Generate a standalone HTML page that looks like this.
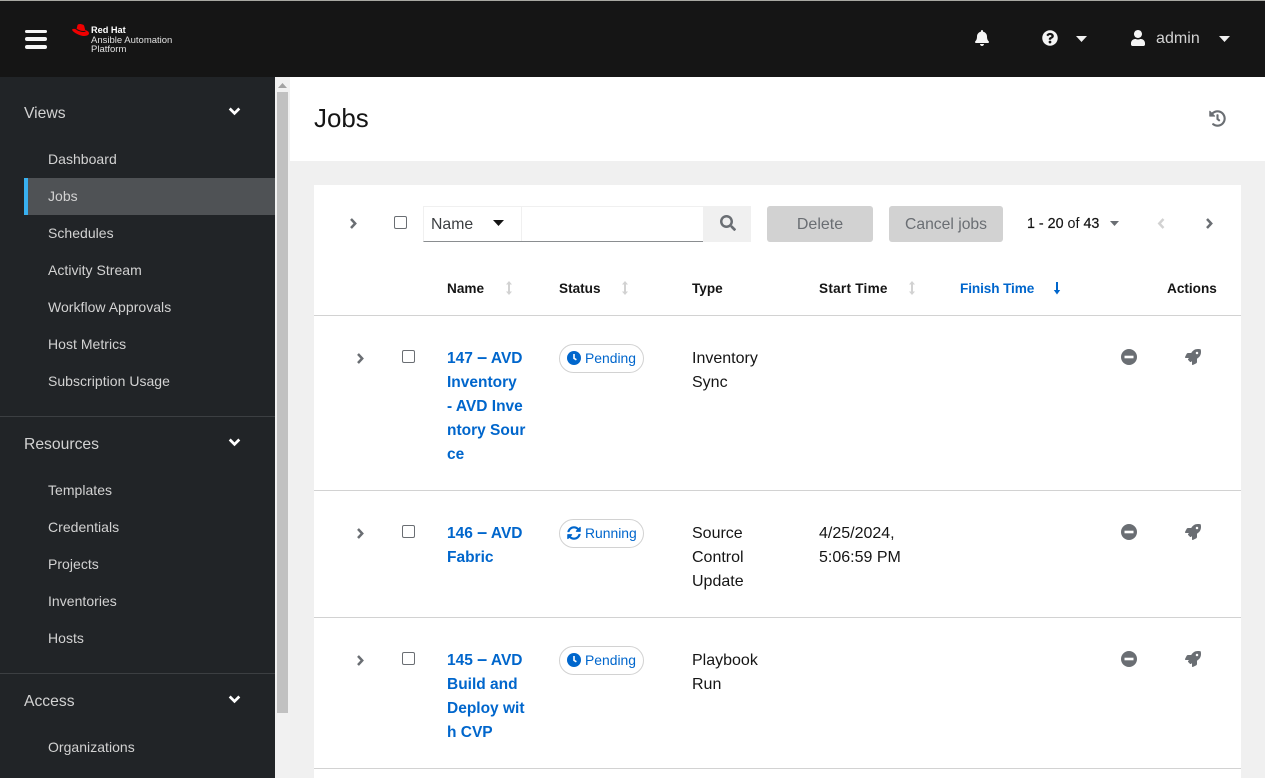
<!DOCTYPE html>
<html lang="en"><head><meta charset="utf-8"><title>Jobs</title>
<style>
html,body{margin:0;padding:0;width:1265px;height:778px;overflow:hidden;background:#f0f0f0;font-family:"Liberation Sans",sans-serif;}
.a{position:absolute;}
.t{position:absolute;white-space:nowrap;line-height:24px;height:24px;}
.nav{color:#d2d2d2;font-size:14px;left:48px;letter-spacing:.03px;}
.sec{color:#d2d2d2;font-size:15.7px;left:24px;}
.th{color:#151515;font-size:13.6px;font-weight:bold;top:277px;}
.lnk{color:#0066cc;font-size:15.5px;font-weight:bold;left:447px;}
.lnk i{font-style:normal;font-size:18px;line-height:0;}
.c{color:#151515;font-size:16px;}
.line{position:absolute;left:314px;width:927px;height:1px;background:#d2d2d2;}
.cb{position:absolute;width:11px;height:11px;border:1px solid #6a6e73;border-radius:2px;background:#fff;}
.badge{position:absolute;left:559px;width:83px;height:27px;border:1px solid #d2d2d2;border-radius:15px;background:#fff;}
.badge span{position:absolute;left:25px;top:0;line-height:27px;font-size:13.9px;color:#0066cc;}
svg{position:absolute;display:block;}
</style></head><body>
<!-- top bar -->
<div class="a" style="left:0;top:0;width:1265px;height:77px;background:#151515"></div>
<div class="a" style="left:0;top:0;width:1265px;height:1px;background:#a8a8a2"></div>
<div class="a" style="left:25px;top:29.500px;width:22px;height:3.500px;background:#f5f5f5;border-radius:2px"></div>
<div class="a" style="left:25px;top:37px;width:22px;height:3.500px;background:#f5f5f5;border-radius:2px"></div>
<div class="a" style="left:25px;top:45px;width:22px;height:3.500px;background:#f5f5f5;border-radius:2px"></div>
<svg style="left:72px;top:23px" width="18" height="14" viewBox="0 0 18 14"><path d="M5.5 2C6 1 8 .7 9.5 1.2 11 1.7 11.8 1.500 12.2 3L13.2 7C15 7.500 17 8.700 17 10.300 17 12 15 13 12.500 13 8.500 13 3.500 10.500 1 8.200 .3 7.500 -.2 6.800 .3 6.300 1 5.600 3 6 4.500 6.500z" fill="#e00"/><path d="M4.500 6.300C7 7.800 10.500 8.800 13.400 8.300" stroke="#151515" stroke-width="1" fill="none"/></svg>
<div class="t" style="left:91px;top:24px;font-size:9.200px;font-weight:bold;color:#fff;line-height:12px;height:12px">Red Hat</div>
<div class="t" style="left:91px;top:34.500px;font-size:9.500px;color:#e0e0e0;line-height:12px;height:12px">Ansible Automation</div>
<div class="t" style="left:91px;top:43.500px;font-size:9.500px;color:#e0e0e0;line-height:12px;height:12px">Platform</div>
<svg style="left:975px;top:30px" width="14" height="16" viewBox="0 0 448 512"><path d="M224 512c35.32 0 63.97-28.65 63.97-64H160.03c0 35.35 28.65 64 63.97 64zm215.39-149.71c-19.32-20.76-55.47-51.99-55.47-154.29 0-77.7-54.48-139.9-127.94-155.16V32c0-17.67-14.32-32-31.98-32s-31.98 14.33-31.98 32v20.84C118.56 68.1 64.08 130.3 64.08 208c0 102.3-36.15 133.53-55.47 154.29-6 6.45-8.66 14.16-8.61 21.71.11 16.4 12.98 32 32.1 32h383.8c19.12 0 32-15.6 32.1-32 .05-7.55-2.61-15.27-8.61-21.71z" fill="#f5f5f5"/></svg>
<svg style="left:1042px;top:30px" width="16" height="16" viewBox="0 0 512 512"><path d="M504 256c0 136.997-111.043 248-248 248S8 392.997 8 256C8 119.083 119.043 8 256 8s248 111.083 248 248zM262.655 90c-54.497 0-89.255 22.957-116.549 63.758-3.536 5.286-2.353 12.415 2.715 16.258l34.699 26.31c5.205 3.947 12.621 3.008 16.665-2.122 17.864-22.658 30.113-35.797 57.303-35.797 20.429 0 45.698 13.148 45.698 32.958 0 14.976-12.363 22.667-32.534 33.976C247.128 238.528 216 254.941 216 296v4c0 6.627 5.373 12 12 12h56c6.627 0 12-5.373 12-12v-1.333c0-28.462 83.186-29.647 83.186-106.667 0-58.002-60.165-102-116.531-102zM256 338c-25.365 0-46 20.635-46 46 0 25.364 20.635 46 46 46s46-20.636 46-46c0-25.365-20.635-46-46-46z" fill="#f5f5f5"/></svg>
<svg style="left:1076px;top:36px" width="11" height="6" viewBox="0 0 11 6"><path d="M0 0h11L5.500 6z" fill="#f0f0f0"/></svg>
<svg style="left:1131px;top:30px" width="14" height="16" viewBox="0 0 448 512"><path d="M224 256c70.7 0 128-57.3 128-128S294.7 0 224 0 96 57.3 96 128s57.3 128 128 128zm89.6 32h-16.700c-22.200 10.200-46.900 16-72.900 16s-50.600-5.800-72.900-16h-16.700C60.200 288 0 348.200 0 422.400V464c0 26.500 21.500 48 48 48h352c26.500 0 48-21.500 48-48v-41.600c0-74.200-60.200-134.400-134.400-134.400z" fill="#f5f5f5"/></svg>
<div class="t" style="left:1156px;top:27px;font-size:16px;color:#d2d2d2;letter-spacing:.05px">admin</div>
<svg style="left:1218.500px;top:36px" width="11" height="6" viewBox="0 0 11 6"><path d="M0 0h11L5.500 6z" fill="#f0f0f0"/></svg>
<!-- sidebar -->
<div class="a" style="left:0;top:77px;width:275px;height:701px;background:#212427"></div>
<div class="a" style="left:275px;top:77px;width:15px;height:701px;background:#f1f1f1"></div>
<div class="a" style="left:277px;top:92px;width:11px;height:621px;background:#c1c1c1"></div>
<svg style="left:278px;top:83px" width="9" height="5" viewBox="0 0 9 5"><path d="M0 5L4.500 0 9 5z" fill="#a3a3a3"/></svg>
<div class="a" style="left:24px;top:178px;width:251px;height:37px;background:#4f5255"></div>
<div class="a" style="left:24px;top:178px;width:4px;height:37px;background:#38b0f0"></div>
<div class="a" style="left:0;top:416px;width:275px;height:1px;background:#3c3f42"></div>
<div class="a" style="left:0;top:673px;width:275px;height:1px;background:#3c3f42"></div>
<div class="t sec" style="top:102px">Views</div>
<div class="t sec" style="top:433px">Resources</div>
<div class="t sec" style="top:690px">Access</div>
<svg style="left:228px;top:107px" width="13" height="9" viewBox="0 0 13 9"><path d="M1.700 1.500l4.800 4.800 4.800-4.800" stroke="#fff" stroke-width="2.700" fill="none"/></svg>
<svg style="left:228px;top:438px" width="13" height="9" viewBox="0 0 13 9"><path d="M1.700 1.500l4.800 4.800 4.800-4.800" stroke="#fff" stroke-width="2.700" fill="none"/></svg>
<svg style="left:228px;top:695px" width="13" height="9" viewBox="0 0 13 9"><path d="M1.700 1.500l4.800 4.800 4.800-4.800" stroke="#fff" stroke-width="2.700" fill="none"/></svg>
<div class="t nav" style="top:147px">Dashboard</div>
<div class="t nav" style="top:184px">Jobs</div>
<div class="t nav" style="top:221px">Schedules</div>
<div class="t nav" style="top:258px">Activity Stream</div>
<div class="t nav" style="top:295px">Workflow Approvals</div>
<div class="t nav" style="top:332px">Host Metrics</div>
<div class="t nav" style="top:369px">Subscription Usage</div>
<div class="t nav" style="top:478px">Templates</div>
<div class="t nav" style="top:515px">Credentials</div>
<div class="t nav" style="top:552px">Projects</div>
<div class="t nav" style="top:589px">Inventories</div>
<div class="t nav" style="top:626px">Hosts</div>
<div class="t nav" style="top:735px">Organizations</div>
<!-- page header -->
<div class="a" style="left:290px;top:77px;width:975px;height:84px;background:#fff"></div>
<div class="t" style="left:314px;top:107px;font-size:25.900px;color:#151515">Jobs</div>
<svg style="left:1208.500px;top:109.500px" width="17" height="17" viewBox="0 0 512 512"><path d="M504 255.531c.253 136.64-111.18 248.372-247.82 248.468-59.015.042-113.223-20.53-155.822-54.911-11.077-8.94-11.905-25.541-1.839-35.607l11.267-11.267c8.609-8.609 22.353-9.551 31.891-1.984C173.062 425.135 212.781 440 256 440c101.705 0 184-82.311 184-184 0-101.705-82.311-184-184-184-48.814 0-93.149 18.969-126.068 49.932l50.754 50.754c10.08 10.08 2.941 27.314-11.313 27.314H24c-8.837 0-16-7.163-16-16V38.627c0-14.254 17.234-21.393 27.314-11.314l49.372 49.372C129.209 34.136 189.552 8 256 8c136.81 0 247.747 110.78 248 247.531zm-180.912 78.784l9.823-12.63c8.138-10.463 6.253-25.542-4.21-33.679L288 256.349V152c0-13.255-10.745-24-24-24h-16c-13.255 0-24 10.745-24 24v135.651l65.409 50.874c10.463 8.137 25.541 6.253 33.679-4.21z" fill="#6a6e73"/></svg>
<!-- card -->
<div class="a" style="left:314px;top:185px;width:927px;height:593px;background:#fff"></div>
<svg style="left:349px;top:217px" width="9" height="13" viewBox="0 0 9 13"><path d="M2 2l4.200 4.500L2 11" stroke="#6a6e73" stroke-width="2.500" fill="none"/></svg>
<div class="cb" style="left:394px;top:216px"></div>
<div class="a" style="left:423px;top:206px;width:280px;border-top:1px solid #f0f0f0;border-left:1px solid #f0f0f0;border-bottom:1px solid #8a8d90;height:34px"></div>
<div class="a" style="left:521px;top:206px;width:1px;height:35px;background:#f0f0f0"></div>
<div class="t" style="left:431px;top:213px;font-size:15.800px;color:#3c3f42">Name</div>
<svg style="left:493px;top:220px" width="11" height="6" viewBox="0 0 11 6"><path d="M0 0h11L5.500 6z" fill="#151515"/></svg>
<div class="a" style="left:703px;top:206px;width:48px;height:36px;background:#f0f0f0"></div>
<svg style="left:719.500px;top:215px" width="16" height="16" viewBox="0 0 512 512"><path d="M505 442.7L405.3 343c-4.5-4.5-10.6-7-17-7H372c27.6-35.3 44-79.7 44-128C416 93.1 322.9 0 208 0S0 93.1 0 208s93.1 208 208 208c48.3 0 92.7-16.4 128-44v16.3c0 6.4 2.5 12.5 7 17l99.7 99.7c9.4 9.4 24.6 9.4 33.9 0l28.3-28.3c9.4-9.4 9.4-24.6.1-34zM208 336c-70.7 0-128-57.2-128-128 0-70.7 57.2-128 128-128 70.7 0 128 57.2 128 128 0 70.7-57.2 128-128 128z" fill="#6a6e73"/></svg>
<div class="a" style="left:767px;top:206px;width:106px;height:36px;background:#d2d2d2;border-radius:3px"></div>
<div class="t" style="left:767px;top:213px;width:106px;text-align:center;font-size:16px;color:#6a6e73">Delete</div>
<div class="a" style="left:889px;top:206px;width:114px;height:36px;background:#d2d2d2;border-radius:3px"></div>
<div class="t" style="left:889px;top:213px;width:114px;text-align:center;font-size:15.700px;color:#6a6e73">Cancel jobs</div>
<div class="t" style="left:1027px;top:212px;font-size:14.300px;color:#151515"><b style="font-weight:normal;-webkit-text-stroke:.2px #151515">1 - 20</b> of <b style="font-weight:normal;-webkit-text-stroke:.2px #151515">43</b></div>
<svg style="left:1110px;top:221px" width="9" height="5" viewBox="0 0 9 5"><path d="M0 0h9L4.500 5z" fill="#6a6e73"/></svg>
<svg style="left:1157px;top:217px" width="9" height="13" viewBox="0 0 9 13"><path d="M6.500 2L2.300 6.500 6.500 11" stroke="#d2d2d2" stroke-width="2.500" fill="none"/></svg>
<svg style="left:1204.500px;top:217px" width="9" height="13" viewBox="0 0 9 13"><path d="M2 2l4.200 4.500L2 11" stroke="#6a6e73" stroke-width="2.500" fill="none"/></svg>
<!-- table header -->
<div class="t th" style="left:447px">Name</div>
<div class="t th" style="left:559px">Status</div>
<div class="t th" style="left:692px">Type</div>
<div class="t th" style="left:819px;letter-spacing:.25px">Start Time</div>
<div class="t th" style="left:960px;color:#0066cc;letter-spacing:-.1px">Finish Time</div>
<div class="t th" style="left:1167px">Actions</div>
<svg style="left:505px;top:280px" width="8" height="16" viewBox="0 0 8 16"><path d="M4 2v12" stroke="#d2d2d2" stroke-width="2"/><path d="M1 4.500L4 1l3 3.500zM1 11.500L4 15l3-3.500z" fill="#d2d2d2"/></svg>
<svg style="left:621px;top:280px" width="8" height="16" viewBox="0 0 8 16"><path d="M4 2v12" stroke="#d2d2d2" stroke-width="2"/><path d="M1 4.500L4 1l3 3.500zM1 11.500L4 15l3-3.500z" fill="#d2d2d2"/></svg>
<svg style="left:908px;top:280px" width="8" height="16" viewBox="0 0 8 16"><path d="M4 2v12" stroke="#d2d2d2" stroke-width="2"/><path d="M1 4.500L4 1l3 3.500zM1 11.500L4 15l3-3.500z" fill="#d2d2d2"/></svg>
<svg style="left:1053px;top:281px" width="8" height="14" viewBox="0 0 8 14"><path d="M4 1v9" stroke="#0066cc" stroke-width="2"/><path d="M.8 9L4 13.500 7.200 9z" fill="#0066cc"/></svg>
<div class="line" style="top:315px"></div>
<div class="line" style="top:490px"></div>
<div class="line" style="top:617px"></div>
<div class="line" style="top:768px"></div>
<!-- row 1 -->
<svg style="left:356px;top:352px" width="9" height="13" viewBox="0 0 9 13"><path d="M2 2l4.200 4.500L2 11" stroke="#6a6e73" stroke-width="2.500" fill="none"/></svg>
<div class="cb" style="left:402px;top:350px"></div>
<div class="t lnk" style="top:347px">147 <i>–</i> AVD</div>
<div class="t lnk" style="top:371px">Inventory</div>
<div class="t lnk" style="top:395px">- AVD Inve</div>
<div class="t lnk" style="top:419px">ntory Sour</div>
<div class="t lnk" style="top:443px">ce</div>
<div class="badge" style="top:344px"><svg style="left:7px;top:6px" width="14" height="14" viewBox="0 0 14 14"><circle cx="7" cy="7" r="7" fill="#0066cc"/><path d="M7 3v4.300l2.400 1.500" stroke="#fff" stroke-width="1.600" fill="none"/></svg><span>Pending</span></div>
<div class="t c" style="left:692px;top:347px">Inventory</div>
<div class="t c" style="left:692px;top:371px">Sync</div>
<svg style="left:1121px;top:349px" width="16" height="16" viewBox="0 0 16 16"><circle cx="8" cy="8" r="8" fill="#6a6e73"/><rect x="3.500" y="6.700" width="9" height="2.600" fill="#fff"/></svg>
<svg style="left:1185px;top:349px" width="16" height="16" viewBox="0 0 512 512"><path fill-rule="evenodd" d="M505.05 19.1a15.89 15.89 0 0 0-12.2-12.2C460.65 0 435.46 0 410.36 0c-103.2 0-165.1 55.2-211.29 128H94.87A48 48 0 0 0 52 154.49l-49.42 98.8A24 24 0 0 0 24.07 288h103.77l-22.47 22.47a32 32 0 0 0 0 45.25l50.9 50.91a32 32 0 0 0 45.26 0L224 384.16V488a24 24 0 0 0 34.7 21.49l98.7-49.39a47.91 47.91 0 0 0 26.5-42.9V312.79c72.59-46.3 128-108.4 128-211.09.1-25.2.1-50.4-6.85-82.6zM384 168a40 40 0 1 1 40-40 40 40 0 0 1-40 40z" fill="#6a6e73"/></svg>
<!-- row 2 -->
<svg style="left:356px;top:527px" width="9" height="13" viewBox="0 0 9 13"><path d="M2 2l4.200 4.500L2 11" stroke="#6a6e73" stroke-width="2.500" fill="none"/></svg>
<div class="cb" style="left:402px;top:525px"></div>
<div class="t lnk" style="top:522px">146 <i>–</i> AVD</div>
<div class="t lnk" style="top:546px">Fabric</div>
<div class="badge" style="top:519px"><svg style="left:7px;top:6px" width="14" height="14" viewBox="0 0 512 512"><path d="M370.72 133.28C339.458 104.008 298.888 87.962 255.848 88c-77.458.068-144.328 53.178-162.791 126.85-1.344 5.363-6.122 9.15-11.651 9.15H24.103c-7.498 0-13.194-6.807-11.807-14.176C33.933 94.924 134.813 8 256 8c66.448 0 126.791 26.136 171.315 68.685L463.03 40.97C478.149 25.851 504 36.559 504 57.941V192c0 13.255-10.745 24-24 24H345.941c-21.382 0-32.09-25.851-16.971-40.971l41.75-41.749zM32 296h134.059c21.382 0 32.09 25.851 16.971 40.971l-41.75 41.75c31.262 29.273 71.835 45.319 114.876 45.28 77.418-.07 144.315-53.144 162.787-126.849 1.344-5.363 6.122-9.15 11.651-9.15h57.304c7.498 0 13.194 6.807 11.807 14.176C478.067 417.076 377.187 504 256 504c-66.448 0-126.791-26.136-171.315-68.685L48.97 471.03C33.851 486.149 8 475.441 8 454.059V320c0-13.255 10.745-24 24-24z" fill="#0066cc"/></svg><span>Running</span></div>
<div class="t c" style="left:692px;top:522px">Source</div>
<div class="t c" style="left:692px;top:546px">Control</div>
<div class="t c" style="left:692px;top:570px">Update</div>
<div class="t c" style="left:819px;top:522px">4/25/2024,</div>
<div class="t c" style="left:819px;top:546px">5:06:59 PM</div>
<svg style="left:1121px;top:524px" width="16" height="16" viewBox="0 0 16 16"><circle cx="8" cy="8" r="8" fill="#6a6e73"/><rect x="3.500" y="6.700" width="9" height="2.600" fill="#fff"/></svg>
<svg style="left:1185px;top:524px" width="16" height="16" viewBox="0 0 512 512"><path fill-rule="evenodd" d="M505.05 19.1a15.89 15.89 0 0 0-12.2-12.2C460.65 0 435.46 0 410.36 0c-103.2 0-165.1 55.2-211.29 128H94.87A48 48 0 0 0 52 154.49l-49.42 98.8A24 24 0 0 0 24.07 288h103.77l-22.47 22.47a32 32 0 0 0 0 45.25l50.9 50.91a32 32 0 0 0 45.26 0L224 384.16V488a24 24 0 0 0 34.7 21.49l98.7-49.39a47.91 47.91 0 0 0 26.5-42.9V312.79c72.59-46.3 128-108.4 128-211.09.1-25.2.1-50.4-6.85-82.6zM384 168a40 40 0 1 1 40-40 40 40 0 0 1-40 40z" fill="#6a6e73"/></svg>
<!-- row 3 -->
<svg style="left:356px;top:654px" width="9" height="13" viewBox="0 0 9 13"><path d="M2 2l4.200 4.500L2 11" stroke="#6a6e73" stroke-width="2.500" fill="none"/></svg>
<div class="cb" style="left:402px;top:652px"></div>
<div class="t lnk" style="top:649px">145 <i>–</i> AVD</div>
<div class="t lnk" style="top:673px">Build and</div>
<div class="t lnk" style="top:697px">Deploy wit</div>
<div class="t lnk" style="top:721px">h CVP</div>
<div class="badge" style="top:646px"><svg style="left:7px;top:6px" width="14" height="14" viewBox="0 0 14 14"><circle cx="7" cy="7" r="7" fill="#0066cc"/><path d="M7 3v4.300l2.400 1.500" stroke="#fff" stroke-width="1.600" fill="none"/></svg><span>Pending</span></div>
<div class="t c" style="left:692px;top:649px">Playbook</div>
<div class="t c" style="left:692px;top:673px">Run</div>
<svg style="left:1121px;top:651px" width="16" height="16" viewBox="0 0 16 16"><circle cx="8" cy="8" r="8" fill="#6a6e73"/><rect x="3.500" y="6.700" width="9" height="2.600" fill="#fff"/></svg>
<svg style="left:1185px;top:651px" width="16" height="16" viewBox="0 0 512 512"><path fill-rule="evenodd" d="M505.05 19.1a15.89 15.89 0 0 0-12.2-12.2C460.65 0 435.46 0 410.36 0c-103.2 0-165.1 55.2-211.29 128H94.87A48 48 0 0 0 52 154.49l-49.42 98.8A24 24 0 0 0 24.07 288h103.77l-22.47 22.47a32 32 0 0 0 0 45.25l50.9 50.91a32 32 0 0 0 45.26 0L224 384.16V488a24 24 0 0 0 34.7 21.49l98.7-49.39a47.91 47.91 0 0 0 26.5-42.9V312.79c72.59-46.3 128-108.4 128-211.09.1-25.2.1-50.4-6.85-82.6zM384 168a40 40 0 1 1 40-40 40 40 0 0 1-40 40z" fill="#6a6e73"/></svg>
</body></html>
